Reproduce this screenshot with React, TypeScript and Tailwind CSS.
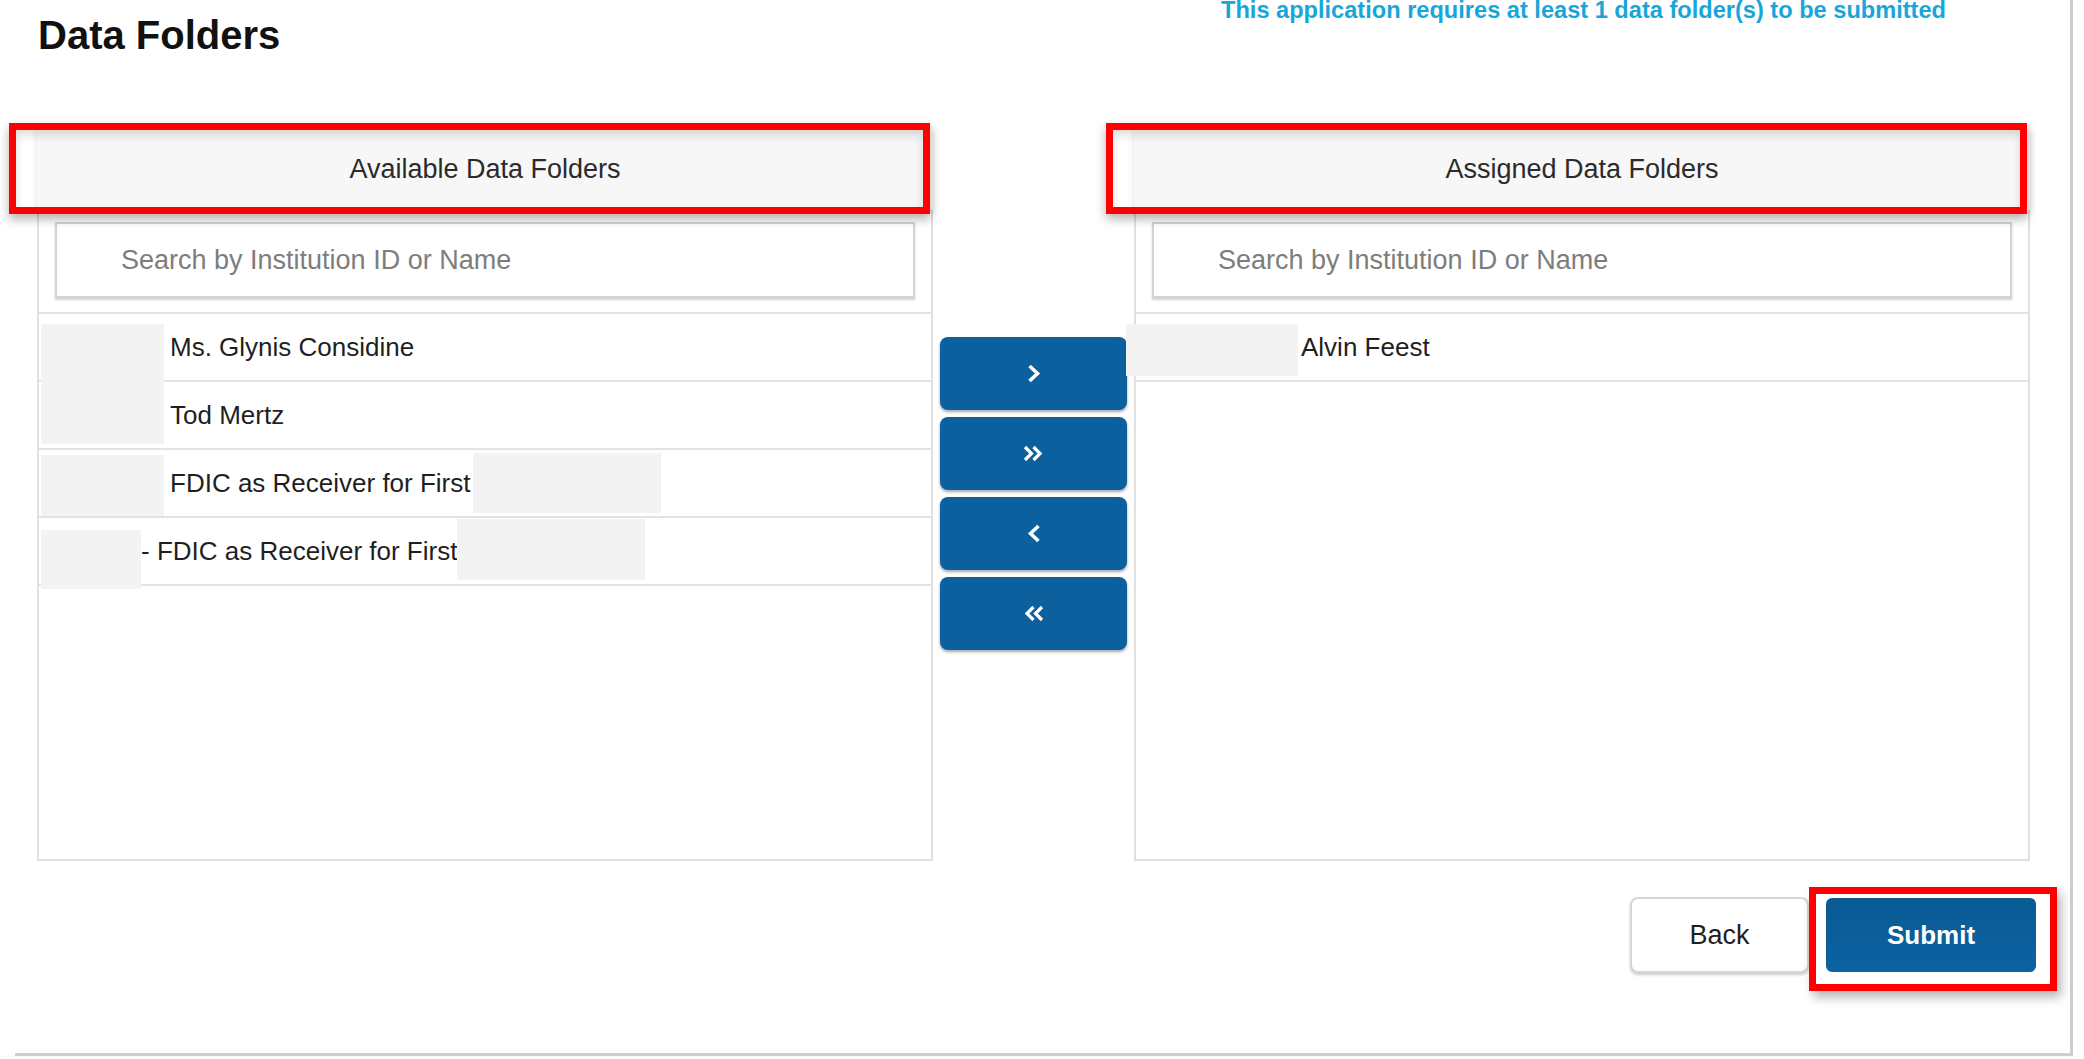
import React from 'react';

// Row data for the two lists. Grey blocks are masked ids that sit before / after the name.
interface Mask {
  width: number;
  top: number;
  height: number;
  offset: number;
}

interface FolderItem {
  name: string;
  lead: Mask;
  tail?: Mask;
}

const available: FolderItem[] = [
  { name: 'Ms. Glynis Considine', lead: { width: 123, top: 10, height: 58, offset: 0 } },
  { name: 'Tod Mertz', lead: { width: 123, top: 0, height: 62, offset: 0 } },
  {
    name: 'FDIC as Receiver for First',
    lead: { width: 123, top: 5, height: 61, offset: 0 },
    tail: { width: 188, top: 3, height: 60, offset: 2 },
  },
  {
    name: '- FDIC as Receiver for First',
    lead: { width: 100, top: 12, height: 59, offset: 0 },
    tail: { width: 188, top: 1, height: 61, offset: 0 },
  },
];

const assigned: FolderItem[] = [
  { name: 'Alvin Feest', lead: { width: 172, top: 10, height: 52, offset: -12 } },
];

const MaskBlock: React.FC<{ mask: Mask }> = ({ mask }) => (
  <span
    className="shrink-0 bg-[#f3f3f3]"
    style={{ width: mask.width, height: mask.height, marginTop: mask.top, marginLeft: mask.offset }}
  />
);

const FolderRow: React.FC<{ item: FolderItem; textGap: number }> = ({ item, textGap }) => (
  <div className="flex h-[68px] items-start border-b-2 border-[#e3e3e3] pl-[2px]">
    <MaskBlock mask={item.lead} />
    <span
      className="self-center whitespace-nowrap text-[26px] leading-none text-[#1f1f1f]"
      style={{ marginLeft: item.name.startsWith('-') ? 0 : textGap }}
    >
      {item.name}
    </span>
    {item.tail && <MaskBlock mask={item.tail} />}
  </div>
);

const FolderPanel: React.FC<{ title: string; items: FolderItem[]; textGap: number }> = ({
  title,
  items,
  textGap,
}) => (
  <div className="flex flex-col">
    <div className="relative">
      <div className="flex h-[82px] items-center justify-center bg-[#f7f7f7] text-[27px] text-[#2b2b2b] shadow-[0_2px_6px_rgba(0,0,0,0.12)]">
        {title}
      </div>
      {/* highlight frame */}
      <div className="pointer-events-none absolute -left-[28px] right-[3px] -top-[5px] -bottom-[4px] border-[7px] border-[#fe0000] shadow-[0_5px_10px_rgba(0,0,0,0.3),inset_0_5px_10px_rgba(0,0,0,0.14)]" />
    </div>
    <div className="h-[651px] border-x-2 border-b-2 border-[#e0e0e0]">
      <div className="mx-4 mt-3 flex h-[76px] items-center border-2 border-[#d3d3d3] pl-[64px] shadow-[0_2px_2px_rgba(0,0,0,0.18)]">
        <input
          className="w-full bg-transparent text-[27px] text-[#333] outline-none placeholder:text-[#7d7d7d]"
          placeholder="Search by Institution ID or Name"
        />
      </div>
      <div className="mt-[14px] border-t-2 border-[#e3e3e3]">
        {items.map((item) => (
          <FolderRow key={item.name} item={item} textGap={textGap} />
        ))}
      </div>
    </div>
  </div>
);

const Chevron: React.FC<{ dir: 'left' | 'right'; double?: boolean }> = ({ dir, double }) => {
  const flip = dir === 'left' ? 'scale(-1,1)' : undefined;
  if (double) {
    return (
      <svg width="21" height="17" viewBox="0 0 21 17" style={{ transform: flip }}>
        <g fill="none" stroke="white" strokeWidth="3.2" strokeLinejoin="miter">
          <polyline points="2,2 8.5,8.5 2,15" />
          <polyline points="10.5,2 17,8.5 10.5,15" />
        </g>
      </svg>
    );
  }
  return (
    <svg width="14" height="19" viewBox="0 0 14 19" style={{ transform: flip }}>
      <polyline points="2.5,2 10.5,9.5 2.5,17" fill="none" stroke="white" strokeWidth="3.6" />
    </svg>
  );
};

const MoveButton: React.FC<{ children: React.ReactNode }> = ({ children }) => (
  <button className="flex h-[73px] w-full items-center justify-center rounded-[8px] bg-[#0b609d] shadow-[0_2px_3px_rgba(0,0,0,0.35)]">
    {children}
  </button>
);

export default function App() {
  return (
    <div className="h-[1059px] w-[2084px] overflow-hidden bg-white font-['Liberation_Sans',Arial,sans-serif]">
      <div className="ml-[15px] flex h-[1056px] w-[2058px] flex-col border-b-[3px] border-r-[3px] border-[#cdcdcd] pl-[22px] pr-[38px] pt-[15px]">
        <div className="flex items-start justify-between">
          <h1 className="pl-[1px] text-[40px] font-bold leading-none text-[#111]">Data Folders</h1>
          <p className="-mt-[16px] mr-[86px] whitespace-nowrap text-[23.6px] font-bold leading-none text-[#18a6da]">
            This application requires at least 1 data folder(s) to be submitted
          </p>
        </div>

        <div className="mt-[73px] grid grid-cols-[896px_201px_896px]">
          <FolderPanel title="Available Data Folders" items={available} textGap={6} />

          <div className="flex flex-col gap-[7px] px-[7px] pt-[209px]">
            <MoveButton>
              <Chevron dir="right" />
            </MoveButton>
            <MoveButton>
              <Chevron dir="right" double />
            </MoveButton>
            <MoveButton>
              <Chevron dir="left" />
            </MoveButton>
            <MoveButton>
              <Chevron dir="left" double />
            </MoveButton>
          </div>

          <FolderPanel title="Assigned Data Folders" items={assigned} textGap={3} />
        </div>

        <div className="-mr-[4px] mt-[36px] flex items-center justify-end gap-[17px]">
          <button className="h-[76px] w-[179px] rounded-[8px] border-2 border-[#d6d6d6] bg-white text-[27px] text-[#1f1f1f] shadow-[0_2px_3px_rgba(0,0,0,0.2)]">
            Back
          </button>
          <div className="relative">
            <button className="h-[74px] w-[210px] rounded-[6px] bg-gradient-to-b from-[#0a5a93] to-[#0b63a2] text-[26px] font-bold text-white">
              Submit
            </button>
            <div className="pointer-events-none absolute -left-[17px] -right-[21px] -top-[11px] -bottom-[19px] border-[7px] border-[#fe0000] shadow-[4px_6px_10px_rgba(0,0,0,0.3)]" />
          </div>
        </div>
      </div>
    </div>
  );
}
